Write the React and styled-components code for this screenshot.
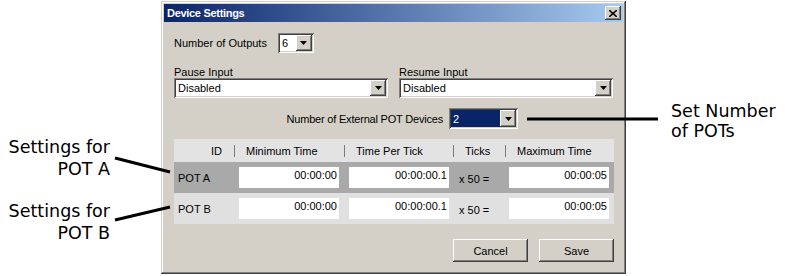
import styled, { createGlobalStyle } from "styled-components";

const GlobalStyle = createGlobalStyle`
  body {
    margin: 0;
    background: #fff;
  }
`;

const face = "#d4d0c8";

const raised = `
  box-shadow: inset -1px -1px #404040, inset 1px 1px #fff,
    inset -2px -2px #808080, inset 2px 2px ${face};
`;

const sunken = `
  box-shadow: inset 1px 1px #808080, inset -1px -1px #fff,
    inset 2px 2px #404040, inset -2px -2px ${face};
`;

const cols = "60px 110px 109px 52px 109px";

const pots = [
  { id: "POT A", min: "00:00:00", tick: "00:00:00.1", max: "00:00:05", bg: "#a9a9a9" },
  { id: "POT B", min: "00:00:00", tick: "00:00:00.1", max: "00:00:05", bg: "#e0e0e0" },
];

function Arrow() {
  return (
    <svg width="7" height="4" viewBox="0 0 7 4">
      <polygon points="0,0 7,0 3.5,4" fill="#000" />
    </svg>
  );
}

function Combo({ width, height = 20, value, selected }) {
  return (
    <ComboBox $w={width} $h={height}>
      <ComboValue $selected={selected}>{value}</ComboValue>
      <ComboButton>
        <Arrow />
      </ComboButton>
    </ComboBox>
  );
}

export default function App() {
  return (
    <>
      <GlobalStyle />
      <Page>
        <LeftNotes>
          <Note $lh={22}>
            Settings for
            <br />
            POT A
          </Note>
          <Note $lh={22}>
            Settings for
            <br />
            POT B
          </Note>
        </LeftNotes>

        <Dialog>
          <TitleBar>
            <span>Device Settings</span>
            <CloseBtn>
              <svg width="8" height="7" viewBox="0 0 8 7">
                <path d="M0 0 L8 7 M8 0 L0 7" stroke="#000" strokeWidth="1.6" />
              </svg>
            </CloseBtn>
          </TitleBar>

          <Body>
            <OutputsRow>
              <span>Number of Outputs</span>
              <Combo width={36} value="6" />
            </OutputsRow>

            <InputsRow>
              <Field>
                <FieldLabel>Pause Input</FieldLabel>
                <Combo width={214} value="Disabled" />
              </Field>
              <Field>
                <FieldLabel>Resume Input</FieldLabel>
                <Combo width={214} value="Disabled" />
              </Field>
            </InputsRow>

            <PotRow>
              <PotLabel>Number of External POT Devices</PotLabel>
              <Combo width={69} height={21} value="2" selected />
            </PotRow>

            <Table>
              <HeaderRow>
                <HeaderCell $right>ID</HeaderCell>
                <HeaderCell $sep>Minimum Time</HeaderCell>
                <HeaderCell $sep>Time Per Tick</HeaderCell>
                <HeaderCell $sep>Ticks</HeaderCell>
                <HeaderCell $sep>Maximum Time</HeaderCell>
              </HeaderRow>
              {pots.map((p) => (
                <PotLine key={p.id} $bg={p.bg}>
                  <Cell $pl={4}>{p.id}</Cell>
                  <Cell $pl={5}>
                    <TimeBox>{p.min}</TimeBox>
                  </Cell>
                  <Cell $pl={5}>
                    <TimeBox>{p.tick}</TimeBox>
                  </Cell>
                  <Cell $pl={6}>
                    <Ticks>x 50 =</Ticks>
                  </Cell>
                  <Cell $pl={4}>
                    <TimeBox>{p.max}</TimeBox>
                  </Cell>
                </PotLine>
              ))}
            </Table>

            <Buttons>
              <Button>Cancel</Button>
              <Button>Save</Button>
            </Buttons>
          </Body>
        </Dialog>

        <RightNotes>
          <Note $lh={20} $left>
            Set Number
            <br />
            of POTs
          </Note>
        </RightNotes>

        <Leaders width="785" height="276" viewBox="0 0 785 276">
          <line x1="115" y1="158" x2="170" y2="172" />
          <line x1="115" y1="220" x2="170" y2="207" />
          <line x1="527" y1="119" x2="658" y2="119" />
        </Leaders>
      </Page>
    </>
  );
}

const Page = styled.div`
  position: relative;
  width: 785px;
  height: 276px;
  display: flex;
  align-items: flex-start;
  overflow: hidden;
  font-family: "Liberation Sans", Arial, sans-serif;
  font-size: 11px;
  color: #000;
`;

const LeftNotes = styled.div`
  width: 161px;
  box-sizing: border-box;
  padding: 136px 51px 0 0;
  display: flex;
  flex-direction: column;
  gap: 20px;
`;

const RightNotes = styled.div`
  flex: 1;
  padding: 101px 0 0 45px;
`;

const Note = styled.div`
  font-family: "DejaVu Sans", sans-serif;
  font-size: 17.5px;
  line-height: ${({ $lh }) => $lh}px;
  text-align: ${({ $left }) => ($left ? "left" : "right")};
  white-space: nowrap;
`;

const Leaders = styled.svg`
  position: absolute;
  left: 0;
  top: 0;
  pointer-events: none;

  line {
    stroke: #000;
    stroke-width: 3;
  }
`;

const Dialog = styled.div`
  margin-top: 1px;
  width: 465px;
  height: 273px;
  box-sizing: border-box;
  padding: 3px;
  background: ${face};
  box-shadow: inset -1px -1px #404040, inset 1px 1px ${face},
    inset -2px -2px #808080, inset 2px 2px #fff;
  display: flex;
  flex-direction: column;
`;

const TitleBar = styled.div`
  height: 18px;
  display: flex;
  align-items: center;
  justify-content: space-between;
  padding: 0 2px 0 3px;
  background: linear-gradient(to right, #0a246a, #a6caf0);
  color: #fff;
  font-weight: bold;
  letter-spacing: -0.3px;
`;

const CloseBtn = styled.div`
  width: 16px;
  height: 14px;
  box-sizing: border-box;
  background: ${face};
  ${raised}
  display: flex;
  align-items: center;
  justify-content: center;
`;

const Body = styled.div`
  flex: 1;
  padding: 11px 9px 0 10px;
  display: flex;
  flex-direction: column;
`;

const OutputsRow = styled.div`
  display: flex;
  align-items: center;
  gap: 11px;
`;

const InputsRow = styled.div`
  margin-top: 14px;
  display: grid;
  grid-template-columns: 214px 214px;
  column-gap: 11px;
`;

const Field = styled.div`
  display: flex;
  flex-direction: column;
`;

const FieldLabel = styled.div`
  line-height: 11px;
`;

const PotRow = styled.div`
  margin-top: 10px;
  padding-right: 96px;
  display: flex;
  justify-content: flex-end;
  align-items: center;
  gap: 6px;
`;

const PotLabel = styled.span`
  letter-spacing: -0.2px;
`;

const ComboBox = styled.div`
  width: ${({ $w }) => $w}px;
  height: ${({ $h }) => $h}px;
  box-sizing: border-box;
  padding: 2px;
  background: #fff;
  ${sunken}
  display: flex;
`;

const ComboValue = styled.div`
  flex: 1;
  display: flex;
  align-items: center;
  padding-left: 2px;
  background: ${({ $selected }) => ($selected ? "#0a246a" : "transparent")};
  color: ${({ $selected }) => ($selected ? "#fff" : "#000")};
`;

const ComboButton = styled.div`
  width: 16px;
  box-sizing: border-box;
  background: ${face};
  ${raised}
  display: flex;
  align-items: center;
  justify-content: center;
`;

const Table = styled.div`
  margin-top: 10px;
  width: 440px;
`;

const HeaderRow = styled.div`
  display: grid;
  grid-template-columns: ${cols};
  height: 23px;
  align-items: center;
  background: #e3e3e3;
`;

const HeaderCell = styled.div`
  height: 12px;
  line-height: 12px;
  box-sizing: border-box;
  text-align: ${({ $right }) => ($right ? "right" : "left")};
  padding: ${({ $right }) => ($right ? "0 12px 0 0" : "0 0 0 11px")};
  border-left: ${({ $sep }) => ($sep ? "1px solid #7a7a7a" : "none")};
`;

const PotLine = styled.div`
  display: grid;
  grid-template-columns: ${cols};
  height: 31px;
  background: ${({ $bg }) => $bg};
`;

const Cell = styled.div`
  display: flex;
  align-items: center;
  padding-left: ${({ $pl }) => $pl}px;
`;

const TimeBox = styled.div`
  align-self: flex-start;
  margin-top: 5px;
  width: 100px;
  height: 21px;
  box-sizing: border-box;
  padding: 2px 2px 0 0;
  line-height: 13px;
  background: #fff;
  text-align: right;
`;

const Ticks = styled.span`
  margin-top: 2px;
`;

const Buttons = styled.div`
  margin-top: 15px;
  display: flex;
  justify-content: flex-end;
  gap: 11px;
`;

const Button = styled.div`
  width: 75px;
  height: 23px;
  box-sizing: border-box;
  background: ${face};
  ${raised}
  display: flex;
  align-items: center;
  justify-content: center;
`;
